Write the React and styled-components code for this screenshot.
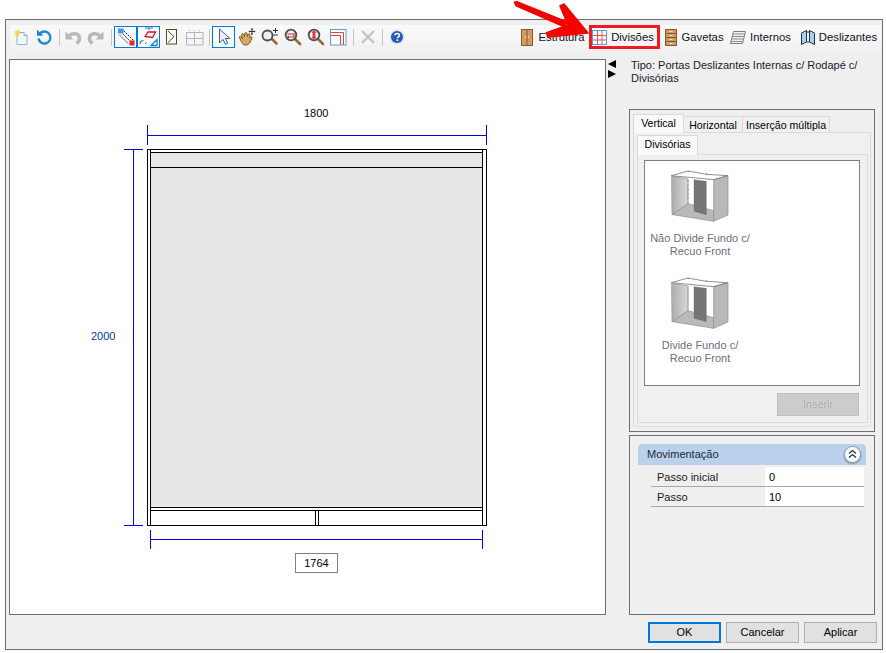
import React from 'react';
import styled, { createGlobalStyle } from 'styled-components';

const GlobalStyle = createGlobalStyle`
  html, body { margin: 0; padding: 0; background: #fff; }
  body { font-family: "Liberation Sans", Arial, sans-serif; font-size: 11px; color: #000; }
`;

const Page = styled.div`
  position: relative;
  width: 886px;
  height: 653px;
  padding: 19px 0 0 5px;
  box-sizing: border-box;
  overflow: hidden;
`;
const Window = styled.div`
  width: 878px;
  height: 631px;
  box-sizing: border-box;
  border: 1px solid #6f6f6f;
  background: #efefef;
  padding: 5px 5px 0 3px;
  display: flex;
  flex-direction: column;
`;

// Toolbar
const Toolbar = styled.div`
  height: 30px;
  margin: 0 -4px 4px 1px;
  display: flex;
  align-items: flex-start;
  justify-content: space-between;
  background: linear-gradient(#fafafa, #f0f0f0);
`;
const ToolGroup = styled.div`
  display: flex;
  align-items: center;
  height: 22px;
  margin: 1px 0 0 -1px;
`;
const ToolButton = styled.div`
  width: 23px;
  height: 22px;
  box-sizing: border-box;
  display: flex;
  align-items: center;
  justify-content: center;
  border: ${({ $on }) => ($on ? '1px solid #0078d7' : 'none')};
  background: ${({ $on }) => ($on ? '#f7fbff' : 'transparent')};
`;
const Sep = styled.div`
  width: 1px;
  height: 17px;
  background: #c6c6c6;
  margin: 0 ${({ $r }) => $r || 2}px 0 ${({ $l }) => $l || 3}px;
`;
const ModeGroup = styled.div`
  display: flex;
  align-items: center;
  padding-right: 4px;
  font-size: 11.3px;
  color: #10101c;
`;
const ModeItem = styled.div`
  display: flex;
  align-items: center;
  height: 24px;
  box-sizing: border-box;
  gap: ${({ $gap }) => $gap || 5}px;
  margin-left: ${({ $ml }) => $ml || 0}px;
  padding: ${({ $marked }) => ($marked ? '0 3px 0 0' : '0')};
  border: ${({ $marked }) => ($marked ? '3px solid #ed1c24' : 'none')};
`;
const ModeLabel = styled.span`
  width: ${({ $w }) => $w}px;
  display: flex;
  justify-content: center;
  white-space: nowrap;
`;

// Canvas
const Main = styled.div`
  flex: 1;
  display: flex;
`;
const Canvas = styled.div`
  position: relative;
  width: 597px;
  height: 556px;
  box-sizing: border-box;
  border: 1px solid #6f6f6f;
  background: #fff;
`;
const Drawing = styled.svg`
  display: block;
`;
const DimLabel = styled.div`
  position: absolute;
  left: ${({ $x }) => $x}px;
  top: ${({ $y }) => $y}px;
  color: ${({ $blue }) => ($blue ? '#003c9c' : '#000')};
  line-height: 14px;
`;
const DimBox = styled(DimLabel)`
  width: 43px;
  height: 20px;
  box-sizing: border-box;
  border: 1px solid #7f7f7f;
  line-height: 18px;
  text-align: center;
`;
const Splitter = styled.div`
  width: 23px;
  padding: 0 0 0 1px;
  box-sizing: border-box;
`;
const SideColumn = styled.div`
  width: 246px;
  display: flex;
  flex-direction: column;
`;
const TypeText = styled.div`
  height: 50px;
  padding-left: 2px;
  line-height: 13px;
  color: #1a1a2a;
`;
const GroupPanel = styled.div`
  height: 323px;
  box-sizing: border-box;
  border: 1px solid #6f6f6f;
  padding: 4px 3px 0;
`;
const TabStrip = styled.div`
  display: flex;
  align-items: flex-end;
  height: ${({ $h }) => $h}px;
`;
const Tab = styled.div`
  box-sizing: border-box;
  width: ${({ $w }) => $w}px;
  height: ${({ $active, $h }) => ($active ? $h : $h - 2)}px;
  border: 1px solid #d9d9d9;
  border-bottom: none;
  background: ${({ $active }) => ($active ? '#f9f9f9' : '#f0f0f0')};
  margin-left: ${({ $active }) => ($active ? 0 : -1)}px;
  margin-bottom: ${({ $active }) => ($active ? -1 : 0)}px;
  font-size: 10.6px;
  text-align: center;
  line-height: ${({ $active, $h }) => ($active ? $h - 3 : $h - 1)}px;
  position: relative;
  z-index: ${({ $active }) => ($active ? 1 : 0)};
`;
const TabPane = styled.div`
  box-sizing: border-box;
  height: 295px;
  border: 1px solid #dcdcdc;
  padding: 3px 2px 0 3px;
  background: #f0f0f0;
`;
const InnerPane = styled.div`
  box-sizing: border-box;
  height: 269px;
  border: 1px solid #dcdcdc;
  padding: 5px 7px 0 6px;
`;
const ListBox = styled.div`
  box-sizing: border-box;
  height: 226px;
  border: 1px solid #7e7e8a;
  background: #fff;
`;
const ListItem = styled.div`
  width: 110px;
  height: 107px;
  display: flex;
  flex-direction: column;
  align-items: center;
  padding-top: 7px;
  box-sizing: border-box;
  color: #6d6d7c;
  text-align: center;
  line-height: 13px;
`;
const ItemLabel = styled.div`
  margin-top: 7px;
  white-space: nowrap;
`;
const Insert = styled.div`
  width: 82px;
  height: 23px;
  margin: 7px 1px 0 auto;
  box-sizing: border-box;
  border: 1px solid #bfbfbf;
  background: #cccccc;
  color: #a3a3a3;
  text-shadow: 0 0 1px #fff;
  text-align: center;
  line-height: 21px;
`;
const MovePanel = styled.div`
  height: 180px;
  margin-top: 3px;
  box-sizing: border-box;
  border: 1px solid #6f6f6f;
  padding: 8px 8px 0;
`;
const MoveHeader = styled.div`
  height: 21px;
  box-sizing: border-box;
  border-radius: 4px 4px 0 0;
  background: #b9d1ea;
  display: flex;
  align-items: center;
  justify-content: space-between;
  padding: 0 5px 1px 9px;
  color: #1c2a3a;
`;
const Collapse = styled.div`
  width: 17px;
  height: 17px;
  border-radius: 50%;
  background: #fdfdfd;
  border: 1px solid #8c9bb0;
  box-sizing: border-box;
  box-shadow: 0 1px 2px rgba(0, 0, 0, 0.35);
  display: flex;
  align-items: center;
  justify-content: center;
`;
const PropRow = styled.div`
  display: flex;
  height: 20px;
  margin: ${({ $first }) => ($first ? '2px' : '0')} 2px 0 13px;
  box-sizing: border-box;
  border-bottom: 1px solid #a8a8a8;
  line-height: 20px;
`;
const PropName = styled.div`
  width: 114px;
  padding-left: 6px;
  box-sizing: border-box;
  color: #1a1a1a;
`;
const PropValue = styled.div`
  flex: 1;
  background: #fff;
  padding-left: 4px;
`;
const Footer = styled.div`
  display: flex;
  justify-content: flex-end;
  gap: 5px;
  padding-top: 7px;
  margin-bottom: 6px;
`;
const DialogButton = styled.div`
  width: 73px;
  height: 21px;
  box-sizing: border-box;
  border: ${({ $def }) => ($def ? '2px solid #0078d7' : '1px solid #adadad')};
  background: #e1e1e1;
  text-align: center;
  line-height: ${({ $def }) => ($def ? 17 : 19)}px;
`;
const ArrowOverlay = styled.svg`
  position: absolute;
  left: 0;
  top: 0;
  pointer-events: none;
`;

const NewIcon = () => (
  <svg width="18" height="18" viewBox="0 0 18 18">
    <path d="M5 4.500h7l3 3v9H5z" fill="#f2f8fd" stroke="#8db6d6" />
    <path d="M12 4.500v3h3" fill="#dcebf6" stroke="#8db6d6" />
    <path d="M5 .5l1 2.500 2.500-1-1 2.500 2 1-2.500.7.5 2.800-2-2-2 2 .4-2.800L1 6l2.500-1L2.500 2.500 4.500 3.500z" fill="#f6d84a" />
  </svg>
);
const RefreshIcon = () => (
  <svg width="18" height="18" viewBox="0 0 18 18" fill="none">
    <path d="M5 5.500a6 6 0 1 1-1.500 5" stroke="#1a86d8" strokeWidth="2.400" />
    <path d="M2 1.500v6.300h6.300z" fill="#1a86d8" />
  </svg>
);
const UndoIcon = ({ flip }) => (
  <svg width="18" height="18" viewBox="0 0 18 18" style={flip ? { transform: 'scaleX(-1)' } : undefined}>
    <path d="M5 8c3-3.500 10-3 10.500 2 .2 2-1 4-3 5.500" fill="none" stroke="#b9b9b9" strokeWidth="3.600" />
    <path d="M1.500 3.500v8h8z" fill="#b9b9b9" />
  </svg>
);
const NodesIcon = () => (
  <svg width="20" height="20" viewBox="0 0 20 20">
    <path d="M5 5l11 11M7.500 3.500l10 10M3.500 8l9 9" stroke="#222" strokeWidth="1" strokeDasharray="2 1" />
    <rect x="2" y="1.500" width="5.500" height="5" fill="#3c9ee6" />
    <rect x="13.500" y="13.500" width="5" height="5" fill="#e8262c" />
  </svg>
);
const ShapesIcon = () => (
  <svg width="20" height="20" viewBox="0 0 20 20" fill="none">
    <path d="M6 1h8M10 1v2" stroke="#1a7fd0" />
    <path d="M6 9.500L9 5h7.500l-3 5.500z" stroke="#d8141c" strokeWidth="1.300" />
    <path d="M1 17c0-2 1.500-3.500 3.500-3.500" stroke="#1a7fd0" strokeWidth="1.200" />
    <path d="M12 18.500l6-6v6z" stroke="#1a7fd0" strokeWidth="1.300" />
    <path d="M6 17l1.500-1.500" stroke="#1a7fd0" />
  </svg>
);
const SideIcon = () => (
  <svg width="12" height="16" viewBox="0 0 12 16" fill="#fafafa">
    <rect x=".5" y=".5" width="10" height="14.500" stroke="#4a4f22" />
    <path d="M2 2l6 5.700L2 13.500" stroke="#4a4f22" />
  </svg>
);
const TableIcon = () => (
  <svg width="18" height="17" viewBox="0 0 18 17" fill="none" stroke="#b5b5b5">
    <path d="M.5 3.500h16.500v12.500H.5zM.5 9.500h16.500M8.500 3.500V16" />
    <path d="M3.500 1v3M8.500 1v3M13.500 1v3" strokeDasharray="1 1" />
  </svg>
);
const CursorIcon = () => (
  <svg width="16" height="18" viewBox="0 0 16 18">
    <path d="M3.500 1v14l3.500-3.500 2.500 5 2.300-1.200-2.500-4.800h4.700z" fill="#e9eef7" stroke="#47608a" />
  </svg>
);
const HandIcon = () => (
  <svg width="18" height="18" viewBox="0 0 18 18">
    <path d="M1 9c1-1.500 3 .5 3.500 1.500C3.500 8 3 6 4.500 5.500 5.500 5.500 6 7 6.500 8.500c-.2-2.500.3-4 1.500-4 1.200 0 1.200 2.500 1.500 4 .3-1.800.7-3 1.800-2.800 1 .3.600 2.500.6 4.300.6-.8 1.300-1.400 2-1 .8.600-.8 3-1.700 5-1 2-3 3.500-5.500 3C4 17 3.500 13 1 9z" fill="#d9a860" stroke="#5f3d14" strokeWidth=".8" />
    <path d="M14 .5v6M11 3.500h6" stroke="#333" />
    <path d="M14 0l1.300 1.500h-2.600zM14 7l1.300-1.500h-2.600zM10.500 3.500L12 2.200v2.600zM17.500 3.500L16 2.200v2.600z" fill="#333" />
  </svg>
);
const Lens = ({ children }) => (
  <svg width="18" height="18" viewBox="0 0 18 18" fill="none">
    <path d="M10.500 10.500l5.500 5.500" stroke="#9a6a2e" strokeWidth="2.600" strokeLinecap="round" />
    <circle cx="7" cy="7" r="5.300" fill="#f2f5f8" stroke="#4f4f4f" strokeWidth="1.800" />
    {children}
  </svg>
);
const ZoomPlusIcon = () => (
  <svg width="18" height="18" viewBox="0 0 18 18" fill="none">
    <path d="M10 10l5.500 5.500" stroke="#9a6a2e" strokeWidth="2.600" strokeLinecap="round" />
    <circle cx="6.500" cy="7.500" r="5" fill="#eef2f6" stroke="#4f4f4f" strokeWidth="1.800" />
    <path d="M12 2.500h5M14.500 0v5M12 7h5" stroke="#333" />
  </svg>
);
const ZoomWideIcon = () => (
  <Lens>
    <path d="M3.500 6h6.500v3H4" stroke="#c8282c" strokeWidth="1.200" />
    <path d="M2.500 9l2.500-1.500V10.500z" fill="#c8282c" />
  </Lens>
);
const ZoomTallIcon = () => (
  <Lens>
    <path d="M7 3.500v7" stroke="#e04048" strokeWidth="3" />
    <path d="M7 2l2.500 3h-5zM7 12l2.500-3h-5z" fill="#e04048" />
  </Lens>
);
const FrameIcon = () => (
  <svg width="17" height="17" viewBox="0 0 17 17" fill="none">
    <rect x=".5" y=".5" width="15.500" height="15.500" stroke="#5a9fd6" fill="#fcfcfc" />
    <path d="M1 3.500h12.500V16M1 6.500h9.500V16" stroke="#d9464a" />
  </svg>
);
const CrossIcon = () => (
  <svg width="16" height="16" viewBox="0 0 16 16">
    <path d="M2 2l12 12M14 2L2 14" stroke="#c4c4c4" strokeWidth="2.400" />
  </svg>
);
const HelpIcon = () => (
  <svg width="16" height="16" viewBox="0 0 16 16">
    <circle cx="8" cy="8" r="7.500" fill="#dbe4f2" />
    <circle cx="8" cy="8" r="6" fill="#2a5bb0" />
    <path d="M5.800 6.300c0-2.500 4.600-2.600 4.600 0 0 1.600-2 1.500-2 3" stroke="#fff" strokeWidth="1.500" fill="none" />
    <rect x="7.500" y="10.400" width="1.700" height="1.600" fill="#fff" />
  </svg>
);
const WardrobeIcon = () => (
  <svg width="12" height="17" viewBox="0 0 12 17">
    <rect x=".5" y=".5" width="11" height="16" fill="#d59a62" stroke="#8a5a2c" />
    <path d="M6 1v15" stroke="#8a5a2c" />
    <path d="M4.500 7v2M7.500 7v2" stroke="#f3dcc0" />
  </svg>
);
const GridIcon = () => (
  <svg width="15" height="15" viewBox="0 0 15 15" fill="#fff">
    <rect x=".5" y=".5" width="14" height="14" stroke="#5a9fd6" />
    <path d="M5.500 1v13M10 1v13M1 5.500h13M1 10h13" stroke="#e0565c" />
  </svg>
);
const DrawersIcon = () => (
  <svg width="12" height="17" viewBox="0 0 12 17">
    <rect x=".5" y=".5" width="11" height="16" fill="#d09a66" stroke="#8a5a2c" />
    <path d="M1 4.500h10M1 8.500h10M1 12.500h10" stroke="#8a5a2c" />
    <path d="M4.500 2.500h3M4.500 6.500h3M4.500 10.500h3M4.500 14.500h3" stroke="#f0e2cf" />
  </svg>
);
const ShelvesIcon = () => (
  <svg width="16" height="13" viewBox="0 0 16 13" fill="#f2f2f2" stroke="#7f7f7f">
    <path d="M3.500.5h12l-3 12H.5z" />
    <path d="M3 3h12M2.300 5.500h12M1.700 8h12M1.100 10.500h12" strokeWidth=".9" />
  </svg>
);
const SlidingIcon = () => (
  <svg width="14" height="15" viewBox="0 0 14 15">
    <path d="M.5 3l5-2.500v11.500l-5 2.500z" fill="#a7d3ea" stroke="#20333f" />
    <path d="M13.500 3l-5-2.500v11.500l5 2.500z" fill="#a7d3ea" stroke="#20333f" />
    <path d="M5.500 2h3v10h-3z" fill="#e7f3fa" stroke="#20333f" />
  </svg>
);
const ChevronsUp = () => (
  <svg width="9" height="10" viewBox="0 0 9 10" fill="none" stroke="#23345a" strokeWidth="1.300">
    <path d="M1 4.500l3.500-3 3.500 3M1 8.500l3.500-3 3.500 3" />
  </svg>
);

// cabinet thumbnail, in the coordinates of the 3x crop of the picture
const Cabinet = ({ split }) => (
  <svg width="64" height="57" viewBox="130 205 192 171">
    <defs>
      <linearGradient id={split ? 'sideA' : 'sideB'} x1="0" x2="1" y1="0" y2="0">
        <stop offset="0" stopColor="#b0b0b0" />
        <stop offset="1" stopColor="#d8d8d8" />
      </linearGradient>
    </defs>
    <path d="M144 230l46 8h77v95l-77-21-46 33z" fill="#fff" />
    <path d="M144 230l46 8v74l-46 33z" fill={`url(#${split ? 'sideA' : 'sideB'})`} stroke="#8d8d8d" strokeWidth="2" />
    {!split && <path d="M190 240v70" stroke="#777" strokeWidth="2" strokeDasharray="8 5" />}
    {split && <path d="M190 238v74" stroke="#9a9a9a" strokeWidth="2" />}
    <path d="M144 345l46-33 77 21v32z" fill="#b9b9b9" stroke="#8d8d8d" strokeWidth="2" />
    <path d="M208 240l37 5v100l-37-10z" fill="#757575" stroke="#666" strokeWidth="1" />
    <path d="M267 240l43-12v118l-43 19z" fill="#b8b8b8" stroke="#8d8d8d" strokeWidth="2" />
    <path d="M140 228l50-14 55 10 64 4-42 12zM190 214l2 4M245 224l1-4" fill="none" stroke="#7a7a7a" strokeWidth="2.500" />
    <path d="M140 228l2 118" fill="none" stroke="#8d8d8d" strokeWidth="2" />
  </svg>
);

const BLUE = '#0000f0';
const LINE = '#000';

function Plan() {
  return (
    <Drawing width="595" height="554" viewBox="10 60 595 554">
      <rect x="150.500" y="152.500" width="332" height="355" fill="#e7e7e7" />
      <g fill="none" stroke={BLUE} strokeWidth="1">
        <path d="M147.500 125v20M147.500 135.500H486.500M486.500 125v20" />
        <path d="M124 149.500h19M133.500 149.500v376M124 525.500h19" />
        <path d="M150.500 530v19M150.500 539.500H482.500M482.500 530v19" />
      </g>
      <g fill="none" stroke={LINE} strokeWidth="1">
        <rect x="147.500" y="149.500" width="339" height="376" />
        <path d="M150.500 150v375M482.500 150v375" />
        <path d="M150 152.500h333M150 167.500h333M150 507.500h333M150 510.500h333" />
        <path d="M315.500 511v14M318.500 511v14" />
      </g>
    </Drawing>
  );
}

export default function App() {
  return (
    <Page>
      <GlobalStyle />
      <Window>
        <Toolbar>
          <ToolGroup>
            <ToolButton><NewIcon /></ToolButton>
            <ToolButton><RefreshIcon /></ToolButton>
            <Sep $l={4} $r={1} />
            <ToolButton><UndoIcon /></ToolButton>
            <ToolButton><UndoIcon flip /></ToolButton>
            <Sep $l={4} $r={2} />
            <ToolButton $on><NodesIcon /></ToolButton>
            <ToolButton $on><ShapesIcon /></ToolButton>
            <ToolButton><SideIcon /></ToolButton>
            <ToolButton><TableIcon /></ToolButton>
            <Sep />
            <ToolButton $on><CursorIcon /></ToolButton>
            <ToolButton><HandIcon /></ToolButton>
            <ToolButton><ZoomPlusIcon /></ToolButton>
            <ToolButton><ZoomWideIcon /></ToolButton>
            <ToolButton><ZoomTallIcon /></ToolButton>
            <ToolButton><FrameIcon /></ToolButton>
            <Sep />
            <ToolButton><CrossIcon /></ToolButton>
            <Sep />
            <ToolButton><HelpIcon /></ToolButton>
          </ToolGroup>
          <ModeGroup>
            <ModeItem><WardrobeIcon /><ModeLabel $w={47}>Estrutura</ModeLabel></ModeItem>
            <ModeItem $marked $gap={4} $ml={4}><GridIcon /><ModeLabel $w={43}>Divisões</ModeLabel></ModeItem>
            <ModeItem $ml={5}><DrawersIcon /><ModeLabel $w={41}>Gavetas</ModeLabel></ModeItem>
            <ModeItem $ml={7} $gap={3}><ShelvesIcon /><ModeLabel $w={43}>Internos</ModeLabel></ModeItem>
            <ModeItem $ml={9} $gap={4}><SlidingIcon /><ModeLabel $w={58}>Deslizantes</ModeLabel></ModeItem>
          </ModeGroup>
        </Toolbar>
        <Main>
          <Canvas>
            <Plan />
            <DimLabel $x={294} $y={46}>1800</DimLabel>
            <DimLabel $x={81} $y={269} $blue>2000</DimLabel>
            <DimBox $x={285} $y={493}>1764</DimBox>
          </Canvas>
          <Splitter>
            <svg width="10" height="20" viewBox="0 0 10 20">
              <path d="M9 1v8L1 5zM1 11v8l8-4z" fill="#000" />
            </svg>
          </Splitter>
          <SideColumn>
            <TypeText>Tipo: Portas Deslizantes Internas c/ Rodapé c/<br />Divisórias</TypeText>
            <GroupPanel>
              <TabStrip $h={18}>
                <Tab $active $w={51} $h={19}>Vertical</Tab>
                <Tab $w={60} $h={18}>Horizontal</Tab>
                <Tab $w={88} $h={18}>Inserção múltipla</Tab>
              </TabStrip>
              <TabPane>
                <TabStrip $h={18}>
                  <Tab $active $w={61} $h={20}>Divisórias</Tab>
                </TabStrip>
                <InnerPane>
                  <ListBox>
                    <ListItem>
                      <Cabinet />
                      <ItemLabel>Não Divide Fundo c/<br />Recuo Front</ItemLabel>
                    </ListItem>
                    <ListItem>
                      <Cabinet split />
                      <ItemLabel>Divide Fundo c/<br />Recuo Front</ItemLabel>
                    </ListItem>
                  </ListBox>
                  <Insert>Inserir</Insert>
                </InnerPane>
              </TabPane>
            </GroupPanel>
            <MovePanel>
              <MoveHeader>
                Movimentação
                <Collapse><ChevronsUp /></Collapse>
              </MoveHeader>
              <PropRow $first>
                <PropName>Passo inicial</PropName>
                <PropValue>0</PropValue>
              </PropRow>
              <PropRow>
                <PropName>Passo</PropName>
                <PropValue>10</PropValue>
              </PropRow>
            </MovePanel>
          </SideColumn>
        </Main>
        <Footer>
          <DialogButton $def>OK</DialogButton>
          <DialogButton>Cancelar</DialogButton>
          <DialogButton>Aplicar</DialogButton>
        </Footer>
      </Window>
      <ArrowOverlay width="886" height="653" viewBox="0 0 886 653">
        <path d="M514 2L517 1.500 568 22 564 27 516 6z" fill="#f40000" stroke="#f40000" strokeWidth="1" strokeLinejoin="round" />
        <path d="M560 6L564 4 588 33 549 37 546 33 568 25z" fill="#f40000" stroke="#f40000" strokeWidth="1.500" strokeLinejoin="round" />
      </ArrowOverlay>
    </Page>
  );
}
